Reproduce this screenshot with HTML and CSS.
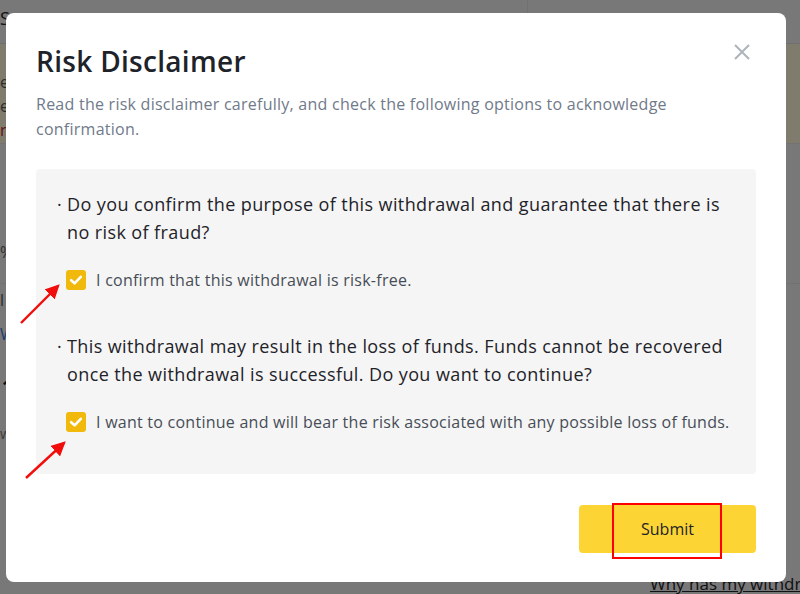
FILE: index.html
```html
<!DOCTYPE html>
<html lang="en">
<head>
    <meta charset="UTF-8">
    <meta name="viewport" content="width=device-width, initial-scale=1.0">
    <title>Risk Disclaimer</title>
    <link rel="stylesheet" href="styles.css">
</head>
<body>
    <div class="page">
        <div class="page-top">
            <div class="page-top-left"><span class="frag frag-top">S</span></div>
        </div>
        <div class="notice">
            <span class="frag">e</span>
            <span class="frag">e</span>
            <span class="frag frag-red">r</span>
        </div>
        <div class="page-row page-row-line"><span class="frag">%</span></div>
        <div class="page-row"><span class="frag">l</span></div>
        <div class="page-row"><span class="frag frag-link">W</span></div>
        <div class="page-row page-row-big"><span class="frag frag-big">1</span></div>
        <div class="page-row"><span class="frag frag-small">w</span></div>
        <a class="page-link" href="#">Why has my withdra</a>
    </div>

    <div class="overlay">
        <div class="dialog">
            <button class="close-btn" aria-label="Close">
                <svg width="16" height="16" viewBox="0 0 16 16">
                    <path d="M1 1L15 15M15 1L1 15" stroke="#aeb4bc" stroke-width="2" fill="none"/>
                </svg>
            </button>
            <h1>Risk Disclaimer</h1>
            <p class="subtitle">Read the risk disclaimer carefully, and check the following options to acknowledge confirmation.</p>

            <div class="questions">
                <div class="question">
                    <p class="question-text"><span class="dot">·</span><span>Do you confirm the purpose of this withdrawal and guarantee that there is no risk of fraud?</span></p>
                    <label class="option">
                        <span class="checkbox">
                            <svg width="20" height="20" viewBox="0 0 20 20">
                                <path d="M5.2 10.2L8.6 13.4L14.8 6.8" stroke="#fff" stroke-width="2.6" fill="none" stroke-linecap="round" stroke-linejoin="round"/>
                            </svg>
                        </span>
                        I confirm that this withdrawal is risk-free.
                    </label>
                </div>
                <div class="question">
                    <p class="question-text"><span class="dot">·</span><span>This withdrawal may result in the loss of funds. Funds cannot be recovered once the withdrawal is successful. Do you want to continue?</span></p>
                    <label class="option">
                        <span class="checkbox">
                            <svg width="20" height="20" viewBox="0 0 20 20">
                                <path d="M5.2 10.2L8.6 13.4L14.8 6.8" stroke="#fff" stroke-width="2.6" fill="none" stroke-linecap="round" stroke-linejoin="round"/>
                            </svg>
                        </span>
                        I want to continue and will bear the risk associated with any possible loss of funds.
                    </label>
                </div>
            </div>

            <div class="actions">
                <button class="submit-btn">Submit</button>
            </div>
        </div>

        <!-- annotation arrows -->
        <svg class="arrows" width="800" height="594" viewBox="0 0 800 594">
            <defs>
                <marker id="head" markerWidth="6" markerHeight="6" refX="5" refY="3" orient="auto" markerUnits="strokeWidth">
                    <path d="M0 0L6 3L0 6Z" fill="#f20d0d"/>
                </marker>
            </defs>
            <line x1="21" y1="323" x2="58" y2="286" stroke="#f20d0d" stroke-width="2.4" marker-end="url(#head)"/>
            <line x1="26" y1="478" x2="64" y2="443" stroke="#f20d0d" stroke-width="2.4" marker-end="url(#head)"/>
        </svg>
    </div>
</body>
</html>
```

FILE: styles.css
```css
:root {
    --text-main: #1e2329;
    --text-sub: #707a8a;
    --text-label: #474d57;
    --panel-bg: #f5f5f5;
    --yellow: #fcd535;
    --check: #f0b90b;
}

* {
    margin: 0;
    padding: 0;
    box-sizing: border-box;
}

body {
    width: 800px;
    height: 594px;
    overflow: hidden;
    font-family: "Open Sans", "Noto Sans", sans-serif;
    background-color: #f0f0f0;
}

/* page behind the modal */
.page {
    height: 594px;
    position: relative;
}

.page-top {
    height: 44px;
    border-bottom: 1px solid #e0e0e0;
}

.page-top-left {
    width: 528px;
    height: 44px;
    border-right: 1px solid #e2e2e2;
    padding-top: 6px;
}

.frag {
    display: block;
    font-size: 16px;
    line-height: 24px;
    color: #5a5a5a;
}

.frag-top {
    color: #222;
    font-size: 18px;
}

.notice {
    background-color: #fff6da;
    height: 100px;
    padding-top: 26px;
    border-bottom: 1px solid #e6e6e6;
}

.frag-red {
    color: #c92a2a;
}

.page-row {
    height: 34px;
    padding-top: 4px;
}

.page-row-line {
    height: 140px;
    padding-top: 96px;
    border-bottom: 1px solid #e2e2e2;
}

.frag-link {
    color: #3a7bd5;
}

.page-row-big {
    height: 66px;
    padding-top: 26px;
}

.frag-big {
    font-size: 34px;
    color: #1e2329;
}

.frag-small {
    font-size: 14px;
    color: #777;
}

.page-link {
    position: absolute;
    left: 650px;
    top: 572px;
    font-size: 17px;
    color: #1e2329;
    white-space: nowrap;
}

/* modal */
.overlay {
    position: fixed;
    inset: 0;
    background-color: rgba(0, 0, 0, 0.5);
}

.dialog {
    position: absolute;
    left: 6px;
    top: 13px;
    width: 780px;
    height: 569px;
    background-color: #fff;
    border-radius: 8px;
    padding: 30px 30px 30px;
}

.close-btn {
    position: absolute;
    top: 31px;
    right: 36px;
    width: 16px;
    height: 16px;
    border: none;
    background: none;
    cursor: pointer;
}

.close-btn svg {
    display: block;
}

h1 {
    font-size: 28px;
    line-height: 36px;
    font-weight: 600;
    letter-spacing: 0.3px;
    color: var(--text-main);
}

.subtitle {
    margin-top: 13px;
    font-size: 16px;
    line-height: 25px;
    letter-spacing: 0.25px;
    color: var(--text-sub);
}

.questions {
    margin-top: 27px;
    background-color: var(--panel-bg);
    border-radius: 4px;
    padding: 21px 21px 0;
}

.question {
    padding-bottom: 42px;
}

.question-text {
    display: flex;
    font-size: 18px;
    line-height: 28px;
    font-weight: 500;
    letter-spacing: 0.4px;
    color: var(--text-main);
}

.dot {
    width: 10px;
    flex-shrink: 0;
}

.option {
    display: flex;
    align-items: center;
    gap: 10px;
    margin-top: 24px;
    padding-left: 9px;
    font-size: 16px;
    line-height: 20px;
    letter-spacing: 0.25px;
    color: var(--text-label);
}

.checkbox {
    width: 20px;
    height: 20px;
    border-radius: 3px;
    background-color: var(--check);
    flex-shrink: 0;
}

.checkbox svg {
    display: block;
}

.actions {
    display: flex;
    justify-content: flex-end;
    margin-top: 31px;
}

.submit-btn {
    position: relative;
    width: 177px;
    height: 48px;
    border: none;
    border-radius: 4px;
    background-color: var(--yellow);
    color: var(--text-main);
    font-family: inherit;
    font-size: 16px;
    font-weight: 500;
    cursor: pointer;
}

/* red highlight drawn on the screenshot */
.submit-btn::after {
    content: "";
    position: absolute;
    left: 33px;
    top: -2px;
    width: 106px;
    height: 52px;
    border: 2px solid #f00;
}

.arrows {
    position: absolute;
    left: 0;
    top: 0;
    pointer-events: none;
}
```
